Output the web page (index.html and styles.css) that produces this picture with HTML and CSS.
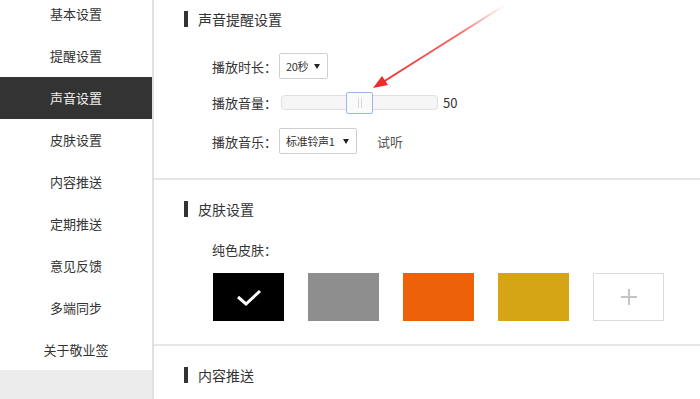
FILE: index.html
```html
<!DOCTYPE html>
<html lang="zh-CN">
<head>
    <meta charset="UTF-8">
    <meta name="viewport" content="width=device-width, initial-scale=1.0">
    <title>声音设置</title>
    <link rel="stylesheet" href="styles.css">
</head>
<body>

<div class="sidebar">
    <ul class="menu">
        <li class="menu-item">基本设置</li>
        <li class="menu-item">提醒设置</li>
        <li class="menu-item active">声音设置</li>
        <li class="menu-item">皮肤设置</li>
        <li class="menu-item">内容推送</li>
        <li class="menu-item">定期推送</li>
        <li class="menu-item">意见反馈</li>
        <li class="menu-item">多端同步</li>
        <li class="menu-item">关于敬业签</li>
    </ul>
    <div class="menu-rest"></div>
</div>

<div class="main">
    <div class="section section-sound">
        <h2 class="section-title">声音提醒设置</h2>
        <div class="form">
            <div class="row">
                <span class="label">播放时长：</span>
                <div class="select select-short">20秒<span class="caret"></span></div>
            </div>
            <div class="row row-slider">
                <span class="label">播放音量：</span>
                <div class="slider">
                    <div class="thumb"><i></i><i></i></div>
                </div>
                <span class="value">50</span>
            </div>
            <div class="row">
                <span class="label">播放音乐：</span>
                <div class="select select-long">标准铃声1<span class="caret"></span></div>
                <span class="listen">试听</span>
            </div>
        </div>
    </div>

    <div class="section section-skin">
        <h2 class="section-title">皮肤设置</h2>
        <div class="skin-label">纯色皮肤：</div>
        <div class="swatches">
            <div class="swatch black">
                <svg width="28" height="20" viewBox="0 0 28 20"><path d="M3 10 L11 17 L25 4" fill="none" stroke="#fff" stroke-width="3"/></svg>
            </div>
            <div class="swatch grey"></div>
            <div class="swatch orange"></div>
            <div class="swatch yellow"></div>
            <div class="swatch add">
                <svg width="20" height="20" viewBox="0 0 20 20"><path d="M10 2 V18 M2 10 H18" stroke="#c4c4c4" stroke-width="2"/></svg>
            </div>
        </div>
    </div>

    <div class="section section-push">
        <h2 class="section-title">内容推送</h2>
    </div>
</div>

<!-- annotation arrow over the page -->
<svg class="arrow" width="700" height="120" viewBox="0 0 700 120">
    <defs>
        <linearGradient id="fade" x1="505" y1="5" x2="373" y2="88" gradientUnits="userSpaceOnUse">
            <stop offset="0" stop-color="#f04040" stop-opacity="0"/>
            <stop offset="0.35" stop-color="#f04040" stop-opacity="0.8"/>
            <stop offset="1" stop-color="#ee2a2a"/>
        </linearGradient>
    </defs>
    <line x1="505" y1="5" x2="383" y2="82" stroke="url(#fade)" stroke-width="2"/>
    <polygon points="373,88 388,85 382,76" fill="#ee2a2a"/>
</svg>

</body>
</html>
```

FILE: styles.css
```css
* {
    margin: 0;
    padding: 0;
    box-sizing: border-box;
}

body {
    font-family: "Noto Sans CJK SC", "Liberation Sans", sans-serif;
    color: #333;
    display: flex;
    height: 100vh;
    overflow: hidden;
    background-color: #fff;
}

.sidebar {
    width: 154px;
    display: flex;
    flex-direction: column;
    border-right: 2px solid #e0e0e0;
}

.menu {
    list-style: none;
    margin-top: -7px;
}

.menu-item {
    height: 42px;
    line-height: 42px;
    text-align: center;
    font-size: 13px;
    color: #333;
}

.menu-item.active {
    background-color: #333;
    color: #f0f0f0;
}

.menu-rest {
    flex: 1;
    margin-top: -1px;
    background-color: #ececec;
}

.main {
    flex: 1;
    margin-top: -11px;
}

.section {
    padding: 22px 0 24px 30px;
    border-bottom: 2px solid #e6e6e6;
}

.section-title {
    height: 16px;
    line-height: 16px;
    border-left: 4px solid #333;
    padding-left: 10px;
    font-size: 14px;
    font-weight: normal;
}

.form {
    margin-top: 26px;
    padding-left: 28px;
}

.row {
    display: flex;
    align-items: center;
    height: 26px;
    margin-bottom: 10px;
    font-size: 13px;
}

.row-slider {
    margin-bottom: 13px;
}

.row:last-child {
    margin-bottom: 0;
}

.label,
.skin-label {
    font-family: "Noto Sans CJK TC", "Noto Sans CJK SC", sans-serif;
}

.label {
    width: 67px;
}

.select {
    position: relative;
    height: 26px;
    line-height: 24px;
    border: 1px solid #cfcfcf;
    border-radius: 2px;
    font-size: 11px;
    padding-left: 6px;
    letter-spacing: -0.3px;
}

.select-short {
    width: 49px;
}

.select-long {
    width: 78px;
}

.caret {
    position: absolute;
    right: 7px;
    top: 10px;
    border-left: 3px solid transparent;
    border-right: 3px solid transparent;
    border-top: 5px solid #222;
}

.slider {
    position: relative;
    width: 157px;
    height: 15px;
    margin-left: 2px;
    border: 1px solid #e0e0e0;
    border-radius: 4px;
    background-color: #f6f6f6;
}

.thumb {
    position: absolute;
    left: 64px;
    top: -4px;
    width: 27px;
    height: 22px;
    border: 1px solid #9ab8ea;
    border-radius: 2px;
    background-color: #fafafa;
    display: flex;
    justify-content: center;
    align-items: center;
    gap: 2px;
}

.thumb i {
    width: 1px;
    height: 10px;
    background-color: #d8d8d8;
}

.value {
    margin-left: 5px;
}

.listen {
    margin-left: 20px;
    color: #555;
}

.section-skin {
    padding-top: 21px;
    padding-bottom: 23px;
}

.skin-label {
    margin-top: 23px;
    padding-left: 28px;
    height: 20px;
    line-height: 20px;
    font-size: 13px;
}

.swatches {
    display: flex;
    gap: 24px;
    margin-top: 13px;
    padding-left: 29px;
}

.swatch {
    width: 71px;
    height: 48px;
    display: flex;
    justify-content: center;
    align-items: center;
}

.black {
    background-color: #000;
}

.grey {
    background-color: #8e8e8e;
}

.orange {
    background-color: #ed6109;
}

.yellow {
    background-color: #d6a516;
}

.add {
    border: 1px solid #dcdcdc;
}

.section-push {
    padding-top: 21px;
    border-bottom: none;
}

.arrow {
    position: absolute;
    left: 0;
    top: 0;
    pointer-events: none;
}
```
